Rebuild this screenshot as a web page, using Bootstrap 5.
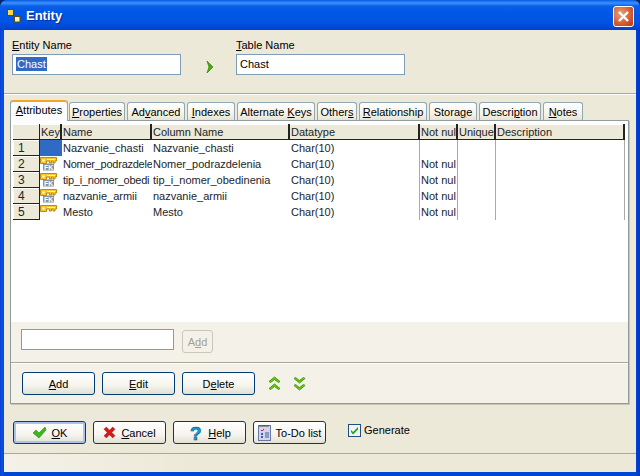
<!DOCTYPE html>
<html lang="en">
<head>
<meta charset="utf-8">
<title>Entity</title>
<link href="https://cdn.jsdelivr.net/npm/bootstrap@5.3.0/dist/css/bootstrap.min.css" rel="stylesheet">
<style>
html,body{height:100%;background:#0a246a;}
body{margin:0;font:11px/14px "Liberation Sans",Arial,sans-serif;color:#000;overflow:hidden;}
u{text-decoration-thickness:1px;text-underline-offset:1px;}
.xp-win{width:640px;height:476px;border-radius:7px 7px 0 0;overflow:hidden;background:linear-gradient(90deg,#0a3bd6 0,#0855dd 2px,#0046d5 4px,#0046d5 636px,#0030c8 640px);}
.xp-title{height:30px;padding:2px 6px 0 6px;background:linear-gradient(180deg,#0a5ae0 0,#3a93ff 3px,#0a5ee6 6px,#0058e6 12px,#0054e3 22px,#0046d5 28px,#0040c8 30px);color:#fff;font:bold 13px/28px "Liberation Sans",Arial,sans-serif;text-shadow:1px 1px 1px #0a2a90;}
.xp-close{width:21px;height:21px;border:1px solid #fff;border-radius:3px;background:radial-gradient(circle at 35% 35%,#e8a080,#d95f30 55%,#b8300f);}
.xp-body{margin:0 4px;height:442px;background:#ece9d8;}
.xp-top{height:64px;padding:8px 8px 0;border-bottom:1px solid #aca899;box-shadow:0 1px 0 #fff;}
.xp-fieldcol{width:169px;}
.xp-input{display:block;width:100%;height:21px;min-height:0;padding:0 3px;border:1px solid #7f9db9;border-radius:0;background:#fff;font:inherit;box-shadow:none;}
.xp-label{display:block;margin:0 0 2px;height:14px;}
.xp-sel{background:#316ac5;color:#fff;padding:0 1px;display:inline-block;line-height:14px;}
.xp-inputtxt{display:flex;align-items:center;padding-bottom:2px;}
.xp-arrow{width:55px;padding-top:23px;padding-left:25px;}
.xp-tabs{padding:0 0 0 6px;gap:2px;height:26px;align-items:flex-end;flex-wrap:nowrap;border:0;position:relative;z-index:2;}
.xp-tab{height:18px;border:1px solid #91a7b4;border-bottom:0;border-radius:3px 3px 0 0;background:linear-gradient(180deg,#fff,#f3f1e6 70%,#e6e3d2);text-align:center;line-height:18px;color:#000;white-space:nowrap;}
.xp-tab-on{height:21px;margin-bottom:-1px;margin-right:-1px;background:#fcfcfe;border-top:0;box-shadow:inset 0 2px 0 #f5a623;line-height:19px;padding-top:1px;}
.w-a{width:58px}.w-b{width:56px}.w-c{width:58px}.w-d{width:48px}.w-e{width:78px}.w-f{width:40px}.w-g{width:68px}.w-h{width:48px}.w-i{width:62px}.w-j{width:40px}
.xp-panel{margin-left:6px;width:619px;height:284px;border:1px solid #919b9c;background:#f4f2e8;box-shadow:1px 1px 0 #c8c5b4;}
.xp-grid{height:201px;background:#fff;padding:3px 3px 0 2px;}
.xp-table{table-layout:fixed;width:612px;border-collapse:separate;border-spacing:0;margin:0;}
.xp-table th,.xp-table td{padding:1px 0 0 1px;font-weight:400;overflow:hidden;white-space:nowrap;height:16px;line-height:14px;background:#fff;border:0;box-shadow:none;}
.xp-table th{background:#ece9d8;border-right:2px solid #222;border-bottom:1px solid #222;box-shadow:inset 0 1px 0 #fff;}
.xp-table th.xp-corner{border-right:1px solid #222;}
.xp-table td.xp-rh{background:#ece9d8;border-right:1px solid #222;border-bottom:1px solid #222;box-shadow:inset 1px 1px 0 #fff;padding-left:5px;font-size:12px;}
.xp-table td.xp-vl{border-right:1px solid #aaa;}
.xp-table td.xp-key{padding:0;}
.xp-table td.xp-keysel{background:#316ac5;}
.xp-table td.xp-tight{letter-spacing:-.25px;}
.xp-c1{width:27px}.xp-c2{width:22px}.xp-c3{width:90px}.xp-c4{width:138px}.xp-c5{width:130px}.xp-c6{width:38px}.xp-c8{width:129px}
.xp-add{height:41px;padding:7px 0 0 10px;gap:8px;border-bottom:1px solid #aca899;box-shadow:0 1px 0 #fff;}
.xp-add .xp-input{width:153px;}
.xp-btn{width:73px;height:23px;padding:0;border:1px solid #003c74;border-radius:3px;background:linear-gradient(180deg,#fff,#f5f4ee 60%,#e3e0d2);font:inherit;color:#000;display:flex;align-items:center;justify-content:center;gap:5px;}
.xp-btn:hover{background:#f5f4ee;border-color:#003c74;color:#000}
.xp-btn-dis{width:31px;height:23px;margin-top:1px;padding:0;border:1px solid #c9c7ba;border-radius:3px;background:#f4f2e8;color:#a1a192;font:inherit;}
.xp-btn-def{box-shadow:inset 0 0 0 2px #a9c3ee;}
.xp-actions{padding:9px 0 0 11px;gap:7px;}
.xp-arrows{gap:12px;margin-left:6px;}
.xp-foot{height:50px;padding:17px 0 0 9px;gap:7px;border-bottom:1px solid #aca899;box-shadow:0 1px 0 #fff;}
.xp-check{margin-left:15px;margin-top:2px;gap:3px;height:14px;}
.xp-box{width:13px;height:13px;border:1px solid #1c5180;background:#f4f4ee;display:block;}
.xp-bottom{height:18px;background:linear-gradient(90deg,#f4f2e8,#ece9d8 30%);}
</style>
</head>
<body>
<div class="xp-win d-flex flex-column">
  <div class="xp-title d-flex align-items-center">
    <svg width="16" height="16" viewBox="0 0 16 16" class="me-1"><path d="M4 4l8 8" stroke="#333" fill="none"/><rect x="1.500" y="1.500" width="6" height="6" fill="#ffd83c" stroke="#5a4a10"/><rect x="8.500" y="8.500" width="5.500" height="5.500" fill="#fff4b0" stroke="#5a4a10"/></svg>
    <span class="flex-grow-1">Entity</span>
    <div class="xp-close d-flex align-items-center justify-content-center"><svg width="13" height="13" viewBox="0 0 13 13"><path d="M2 2l9 9M11 2l-9 9" stroke="#fff" stroke-width="2.400" fill="none"/></svg></div>
  </div>
  <div class="xp-body d-flex flex-column">
    <div class="xp-top d-flex">
      <div class="xp-fieldcol">
        <span class="xp-label"><u>E</u>ntity Name</span>
        <div class="xp-input xp-inputtxt"><span class="xp-sel">Chast</span></div>
      </div>
      <div class="xp-arrow"><svg width="8" height="12" viewBox="0 0 8 12" class="d-block"><path d="M1 0l6 6-6 6 2-6z" fill="#4ca80e" stroke="#37900a" stroke-width=".8"/></svg></div>
      <div class="xp-fieldcol">
        <span class="xp-label"><u>T</u>able Name</span>
        <div class="xp-input xp-inputtxt">Chast</div>
      </div>
    </div>
    <div class="nav nav-tabs xp-tabs d-flex">
      <div class="xp-tab xp-tab-on w-a"><u>A</u>ttributes</div>
      <div class="xp-tab w-b"><u>P</u>roperties</div>
      <div class="xp-tab w-c">Ad<u>v</u>anced</div>
      <div class="xp-tab w-d"><u>I</u>ndexes</div>
      <div class="xp-tab w-e">Alternate <u>K</u>eys</div>
      <div class="xp-tab w-f">Other<u>s</u></div>
      <div class="xp-tab w-g"><u>R</u>elationship</div>
      <div class="xp-tab w-h">Stora<u>g</u>e</div>
      <div class="xp-tab w-i">Descri<u>p</u>tion</div>
      <div class="xp-tab w-j"><u>N</u>otes</div>
    </div>
    <div class="xp-panel">
      <div class="xp-grid">
        <table class="table xp-table">
          <colgroup><col class="xp-c1"><col class="xp-c2"><col class="xp-c3"><col class="xp-c4"><col class="xp-c5"><col class="xp-c6"><col class="xp-c6"><col class="xp-c8"></colgroup>
          <thead><tr><th class="xp-corner"></th><th>Key</th><th>Name</th><th>Column Name</th><th>Datatype</th><th>Not nul</th><th>Unique</th><th>Description</th></tr></thead>
          <tbody>
            <tr><td class="xp-rh">1</td><td class="xp-key xp-keysel"></td><td>Nazvanie_chasti</td><td>Nazvanie_chasti</td><td class="xp-vl">Char(10)</td><td class="xp-vl"></td><td class="xp-vl"></td><td class="xp-vl"></td></tr>
            <tr><td class="xp-rh">2</td><td class="xp-key"><svg width="18" height="15" viewBox="0 0 18 15" class="d-block"><use href="#xp-k"/><use href="#xp-fk"/></svg></td><td class="xp-tight">Nomer_podrazdele</td><td>Nomer_podrazdelenia</td><td class="xp-vl">Char(10)</td><td class="xp-vl">Not nul</td><td class="xp-vl"></td><td class="xp-vl"></td></tr>
            <tr><td class="xp-rh">3</td><td class="xp-key"><svg width="18" height="15" viewBox="0 0 18 15" class="d-block"><use href="#xp-k"/><use href="#xp-fk"/></svg></td><td class="xp-tight">tip_i_nomer_obedi</td><td>tip_i_nomer_obedinenia</td><td class="xp-vl">Char(10)</td><td class="xp-vl">Not nul</td><td class="xp-vl"></td><td class="xp-vl"></td></tr>
            <tr><td class="xp-rh">4</td><td class="xp-key"><svg width="18" height="15" viewBox="0 0 18 15" class="d-block"><use href="#xp-k"/><use href="#xp-fk"/></svg></td><td>nazvanie_armii</td><td>nazvanie_armii</td><td class="xp-vl">Char(10)</td><td class="xp-vl">Not nul</td><td class="xp-vl"></td><td class="xp-vl"></td></tr>
            <tr><td class="xp-rh">5</td><td class="xp-key"><svg width="18" height="15" viewBox="0 0 18 15" class="d-block"><use href="#xp-k"/></svg></td><td>Mesto</td><td>Mesto</td><td class="xp-vl">Char(10)</td><td class="xp-vl">Not nul</td><td class="xp-vl"></td><td class="xp-vl"></td></tr>
          </tbody>
        </table>
      </div>
      <div class="xp-add d-flex">
        <div class="xp-input"></div>
        <button class="xp-btn-dis" disabled>A<u>d</u>d</button>
      </div>
      <div class="xp-actions d-flex">
        <button class="btn xp-btn"><span><u>A</u>dd</span></button>
        <button class="btn xp-btn"><span><u>E</u>dit</span></button>
        <button class="btn xp-btn"><span>D<u>e</u>lete</span></button>
        <div class="xp-arrows d-flex align-items-center">
          <svg width="13" height="15" viewBox="0 0 13 15"><path d="M6.500 1L12 5.500l-1.500 1-4-3-4 3L1 5.500zM6.500 8L12 12.500l-1.500 1-4-3-4 3L1 12.500z" fill="#6cc80e" stroke="#3f9608" stroke-width=".9"/></svg>
          <svg width="13" height="15" viewBox="0 0 13 15"><path d="M6.500 14L12 9.500l-1.500-1-4 3-4-3L1 9.500zM6.500 7L12 2.500l-1.500-1-4 3-4-3L1 2.500z" fill="#6cc80e" stroke="#3f9608" stroke-width=".9"/></svg>
        </div>
      </div>
    </div>
    <div class="xp-foot d-flex">
      <button class="btn xp-btn xp-btn-def"><svg width="15" height="13" viewBox="0 0 15 13"><path d="M1 7l3-3 3 3 6-6 1 3-7 8z" fill="#3db51c" stroke="#2a8a10" stroke-width=".6"/></svg><span><u>O</u>K</span></button>
      <button class="btn xp-btn"><svg width="13" height="13" viewBox="0 0 13 13"><path d="M2 2l9 9M11 2l-9 9" stroke="#d81818" stroke-width="3.600" fill="none"/></svg><span><u>C</u>ancel</span></button>
      <button class="btn xp-btn"><svg width="15" height="20" viewBox="0 0 15 20"><text x="2" y="17" font-family="Liberation Sans" font-weight="700" font-size="19" fill="#12a0c8" stroke="#0b3a8c" stroke-width=".5">?</text></svg><span><u>H</u>elp</span></button>
      <button class="btn xp-btn"><svg width="13" height="17" viewBox="0 0 13 17"><rect x=".5" y="1.500" width="12" height="15" fill="#cfd6ee" stroke="#6b78a8"/><path d="M2 1v2M4 1v2M6 1v2M8 1v2M10 1v2" stroke="#444"/><path d="M3 6l1 1 2-2" stroke="#d02020" fill="none"/><path d="M7 9h4M7 11h4M7 13h4" stroke="#4a5a9a"/><rect x="3" y="9" width="2" height="2" fill="#4a5a9a"/><rect x="3" y="12" width="2" height="2" fill="#4a5a9a"/></svg><span>To-Do list</span></button>
      <label class="xp-check d-flex align-items-center">
        <span class="xp-box"><svg width="11" height="11" viewBox="0 0 11 11" class="d-block"><path d="M2 5l2 2 5-5v2.500l-5 5-2-2.500z" fill="#21a121"/></svg></span>
        <span>Generate</span>
      </label>
    </div>
    <div class="xp-bottom"></div>
  </div>
</div>
<svg width="0" height="0" class="d-block">
  <defs>
    <g id="xp-k"><path d="M.5 1.500h16v3.500h-1.500v2h-2v-2h-1.500v2h-2v-2H6.500v2.500h-6z" fill="#f4c52e" stroke="#b88e0c"/><rect x="2.500" y="3.500" width="2" height="2" fill="#fff"/><path d="M7 3.500h8" stroke="#fff3b0"/></g>
    <g id="xp-fk"><rect x="3" y="7.500" width="11" height="7" fill="#8a929a"/><text x="4" y="13.500" font-family="Liberation Sans" font-weight="700" font-size="7" fill="#fff">FK</text></g>
  </defs>
</svg>
</body>
</html>
